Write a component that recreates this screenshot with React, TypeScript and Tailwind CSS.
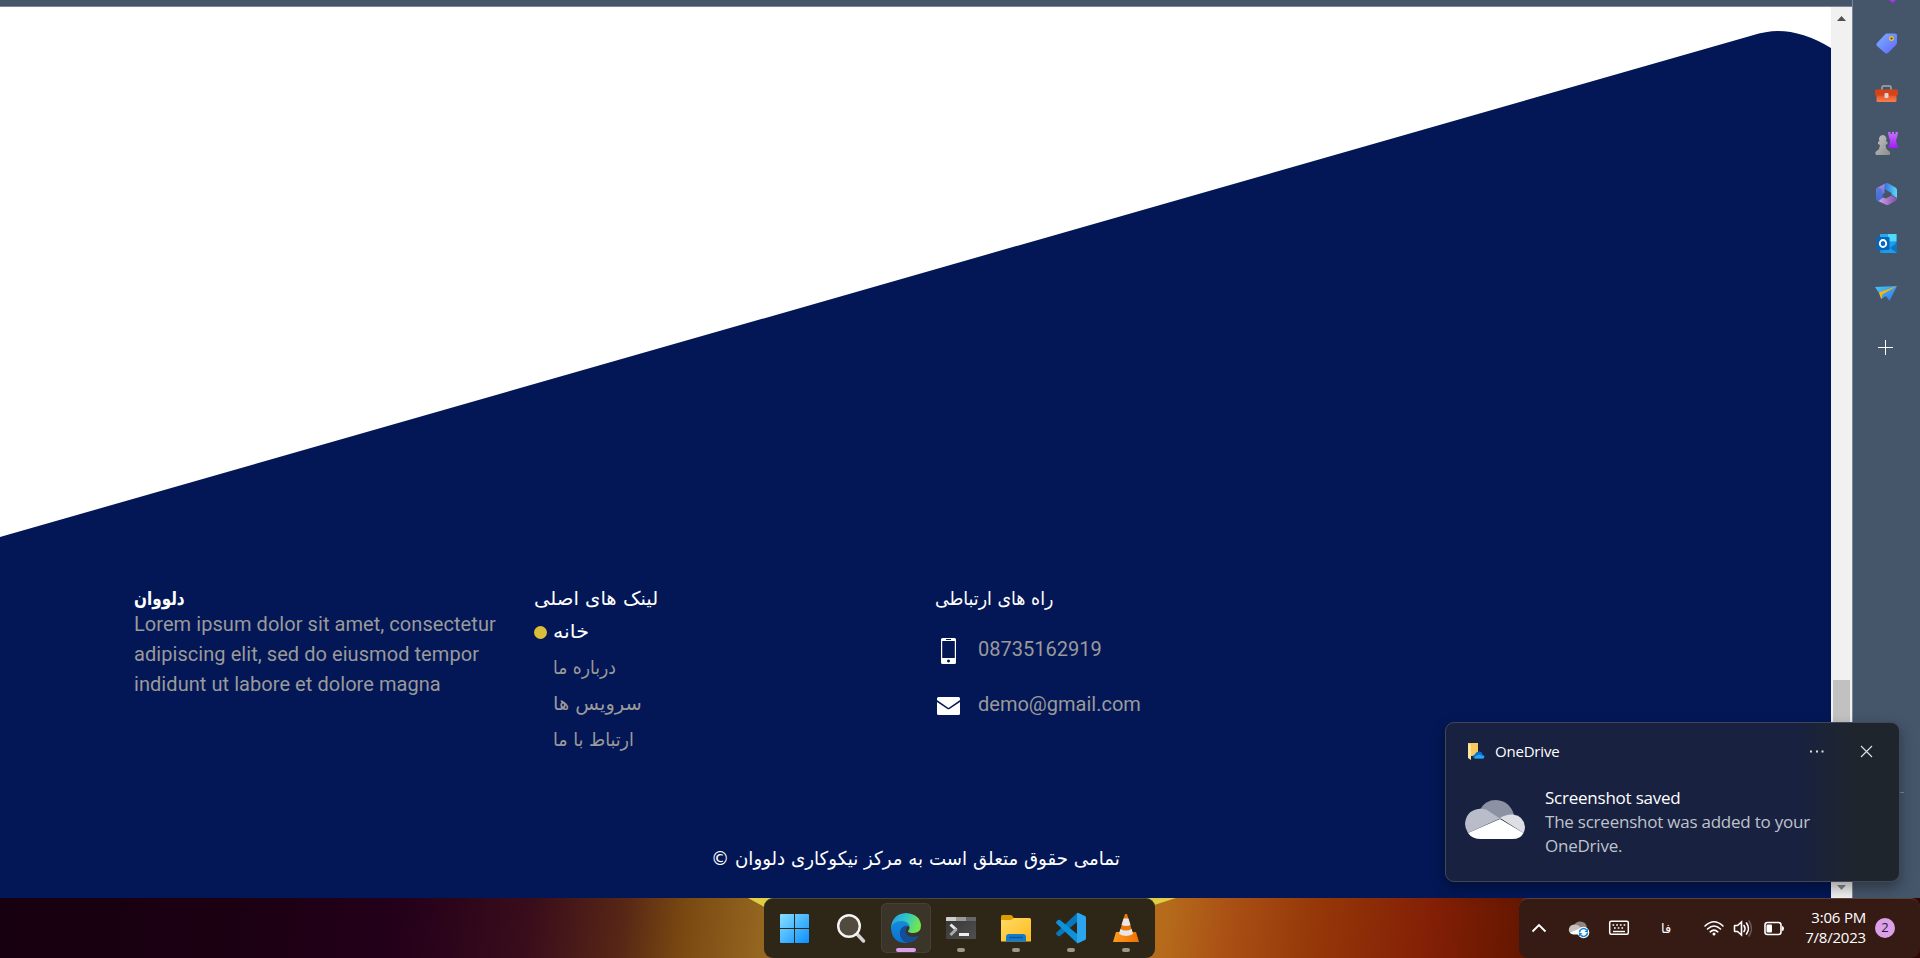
import type { ReactNode } from "react";

function Fa({ children, scale }: { children: ReactNode; scale: string }) {
  return <span dir="rtl" className={`relative top-px inline-block origin-left whitespace-nowrap ${scale}`}>{children}</span>;
}

function PageArea() {
  const links = [
    { label: "درباره ما", scale: "scale-x-[0.9]" },
    { label: "سرویس ها", scale: "scale-x-[1.02]" },
    { label: "ارتباط با ما", scale: "scale-x-[0.92]" },
  ];
  return (
    <main className="relative h-[891px] w-[1831px] overflow-hidden bg-white">
      <svg className="absolute inset-0" width="1831" height="891" viewBox="0 7 1831 891">
        <path d="M0 537 L1752 35.500 Q1766 31 1778 31 Q1803 31 1831 48 V898 H0 Z" fill="#031756" />
      </svg>
      <div className="relative flex h-full flex-col pt-[575px]">
        <div className="flex h-[250px] pl-[134px] text-xl">
          <section className="w-[400px]">
            <h3 className="h-[27px] font-['DejaVu_Sans'] text-[19px] leading-[30px] font-bold text-white">
              <Fa scale="scale-x-[0.8]">دلووان</Fa>
            </h3>
            <p className="font-['Roboto'] text-[20px] leading-[30px] tracking-[0.06px] whitespace-nowrap text-[#9a9a9a]">
              Lorem ipsum dolor sit amet, consectetur
              <br />
              adipiscing elit, sed do eiusmod tempor
              <br />
              indidunt ut labore et dolore magna
            </p>
          </section>
          <section className="w-[401px] font-['DejaVu_Sans'] text-[19px]">
            <h3 className="h-[30px] leading-[30px] text-white"><Fa scale="scale-x-[1.03]">لینک های اصلی</Fa></h3>
            <ul>
              <li className="flex h-9 items-center gap-[6px] text-white">
                <span className="mt-[4px] size-[13px] rounded-full bg-[#d9bf39]" />
                <span className="leading-9"><Fa scale="scale-x-[1.09]">خانه</Fa></span>
              </li>
              {links.map((l) => (
                <li key={l.label} className="h-9 pl-[19px] leading-9 text-[#9a9a9a]"><Fa scale={l.scale}>{l.label}</Fa></li>
              ))}
            </ul>
          </section>
          <section className="font-['Roboto'] text-[20px] text-[#9a9a9a]">
            <h3 className="h-[30px] font-['DejaVu_Sans'] text-[19px] leading-[30px] text-white"><Fa scale="scale-x-[0.915]">راه های ارتباطی</Fa></h3>
            <div className="mt-[18px] flex h-[55px] gap-[17px]">
              <svg width="26" height="42" viewBox="0 0 26 42">
                <path fill="#fff" fillRule="evenodd" d="M7.500 8h12q1.500 0 1.500 1.500v23q0 1.500-1.500 1.500h-12q-1.500 0-1.500-1.500v-23q0-1.500 1.500-1.500ZM7.200 11v17h12.600V11ZM11 9v1h5V9ZM13.500 29.500a1.500 1.500 0 1 0 .01 0Z" />
              </svg>
              <span className="leading-[38px]">08735162919</span>
            </div>
            <div className="flex h-[55px] gap-[17px]">
              <svg width="26" height="42" viewBox="0 -1 26 42">
                <path fill="#fff" d="M2 14v-1.500Q2 11 3.500 11h20Q25 11 25 12.500V14l-11.500 8ZM2 16l10.500 7q1 .6 2 0L25 16v11.500q0 1.500-1.500 1.500h-20Q2 29 2 27.500Z" />
              </svg>
              <span className="leading-[38px]">demo@gmail.com</span>
            </div>
          </section>
        </div>
        <p className="flex justify-center pt-[10px] font-['DejaVu_Sans'] text-[19px] leading-[30px] text-white">
          <span className="relative top-px inline-block scale-x-[0.958]">© تمامی حقوق متعلق است به مرکز نیکوکاری دلووان</span>
        </p>
      </div>
    </main>
  );
}

function ScrollBar() {
  return (
    <div className="flex h-[891px] w-[21px] flex-col items-center bg-[#f1f1f1]">
      <svg width="21" height="21" viewBox="0 0 21 21"><path d="M6 14l4.500-5 4.500 5Z" fill="#505050" /></svg>
      <div className="mt-[652px] h-[180px] w-[17px] bg-[#c1c1c1]" />
      <svg className="mt-auto" width="21" height="21" viewBox="0 0 21 21"><path d="M6 8l4.500 5 4.500-5Z" fill="#858585" /></svg>
    </div>
  );
}

function Sidebar() {
  return (
    <aside className="h-[898px] w-[68px] border-l border-[#7b8798] bg-[#45556a]">
      <svg width="67" height="898" viewBox="1853 0 67 898">
        <defs>
          <linearGradient id="tag" x1="0" y1="0" x2="1" y2="1"><stop stopColor="#7ab4ff" /><stop offset="1" stopColor="#6264ff" /></linearGradient>
          <linearGradient id="rook" x1="0" y1="0" x2="0" y2="1"><stop stopColor="#c873ff" /><stop offset="1" stopColor="#a01cf5" /></linearGradient>
          <linearGradient id="pawn" x1="0" y1="0" x2="1" y2="1"><stop stopColor="#c4c4c4" /><stop offset="1" stopColor="#8c8c8c" /></linearGradient>
          <linearGradient id="box" x1="0" y1="0" x2="0" y2="1"><stop stopColor="#dc4a17" /><stop offset="1" stopColor="#ff7c50" /></linearGradient>
          <linearGradient id="ma" x1="0" y1="0" x2="1" y2="0"><stop stopColor="#2f6ad8" /><stop offset="1" stopColor="#5ad8fa" /></linearGradient>
          <linearGradient id="mb" x1="0" y1="0" x2="0" y2="1"><stop stopColor="#b08be6" /><stop offset="1" stopColor="#3a66cf" /></linearGradient>
          <linearGradient id="mc" x1="0" y1="0" x2="1" y2="0"><stop stopColor="#d9a2ea" /><stop offset="1" stopColor="#7c4fa8" /></linearGradient>
          <linearGradient id="plane" x1="0" y1="0" x2="1" y2="1"><stop stopColor="#45c9f7" /><stop offset="1" stopColor="#3471ea" /></linearGradient>
        </defs>
        <path d="M1889 0h7l-3.500 3Z" fill="#a833ea" />
        <path d="M1887 33.500h8q2 0 2 2v7q0 1.500-1 2.500l-8 8q-1.500 1-3 0l-8-7q-1.500-1.500 0-3l8-8.500q1-1 2-1Z" fill="url(#tag)" />
        <circle cx="1891.500" cy="38.500" r="1.800" fill="#3b3f55" stroke="#f4c51e" strokeWidth="1.400" />
        <path d="M1882 90v-2.500q0-1.500 1.500-1.500h6q1.500 0 1.500 1.500V90" fill="none" stroke="#aaa" strokeWidth="1.500" />
        <rect x="1876.500" y="93" width="20" height="9" rx="1.500" fill="url(#box)" />
        <rect x="1875" y="89.500" width="23" height="6" rx="1.200" fill="#d54316" />
        <rect x="1884.500" y="93" width="4" height="5" rx="1" fill="#d8d8d8" />
        <path d="M1888 132h2.500v2h1.500v-2h2v2h1.500v-2h2.500l-1 6-1 2 1 5 1 1v2h-9.500v-2l1-1 .5-5-1-2Z" fill="url(#rook)" />
        <path d="M1882.500 135a4 4 0 0 1 3.500 6l1.500 1v2l-2 1 1 4 3.500 3v2q0 1-1 1h-12.500q-1 0-1-1v-2l3.500-3 1-4-2-1v-2l1.500-1a4 4 0 0 1 3-6Z" fill="url(#pawn)" />
        <path d="M1884 184.500l2-1.200q1-.5 2 0l7.500 4.200q1.500 1 1.500 2.500v8l-5.500-3.500v-1.500l-8-4.500Z" fill="url(#ma)" />
        <path d="M1886.500 183q-1.500.5-2 2v8l-2.500 2v4l-4 2.500q-2-1-2-3v-8.500q0-1.500 1.500-2.500Z" fill="url(#mb)" />
        <path d="M1878 201l5-3.500 3 1 5.500-3 5.500 2.500q.5 1.500-1.500 3l-6.500 3.500q-1.500 1-3 .3Z" fill="url(#mc)" />
        <path d="M1882 190l1 7-4 4q-2.500 0-2.500-3v-8.500q2-3 5.500.5Z" fill="#3d74d8" fillOpacity="0.7" />
        <rect x="1880" y="234" width="16.500" height="19" rx="1" fill="#1490df" />
        <path d="M1888 234h8.500v7.500H1888Z" fill="#50d9ff" />
        <path d="M1880 234h8v8h-8Z" fill="#28a8ea" />
        <path d="M1888 242h6l2.500 2v9H1880l8-5Z" fill="#1d9cea" />
        <path d="M1897 243v10l-7-5Z" fill="#0b75c4" />
        <rect x="1876.500" y="237" width="13" height="13" rx="1" fill="#0764bd" />
        <ellipse cx="1883" cy="243.500" rx="3.200" ry="3.500" fill="none" stroke="#fff" strokeWidth="1.900" />
        <path d="M1875 287l22-1-7.500 15-3.500-5-5 3-2-6Z" fill="url(#plane)" />
        <path d="M1897 286l-18 6.500 2.500 7 .8-5Z" fill="#ffb400" />
        <path d="M1878 347.500h15M1885.500 340v15" stroke="#fff" strokeWidth="1" />
        <path d="M1875 792.500h29" stroke="#7b8798" />
      </svg>
    </aside>
  );
}

function Toast() {
  return (
    <div className="absolute top-[722px] left-[1445px] h-[160px] w-[455px] rounded-[9px] border border-[#404858] bg-linear-to-r from-[#18213f] from-78% to-[#1f252d] to-90% font-['Open_Sans'] shadow-[0_6px_14px_rgba(0,0,0,0.35)]">
      <div className="flex h-[56px] items-center pl-[21px]">
        <svg width="18" height="18" viewBox="0 0 18 18">
          <path d="M1 1h10v13H1Z" fill="#f5ca60" />
          <path d="M1 1l3 2v15l-3-2Z" fill="#ffe49a" />
          <path d="M8 16.500q-2-.2-2-2t2-2q1-3 4-3t3.500 3q2 .3 2 2t-2 2Z" fill="#0a6fd0" />
          <path d="M8 16.500q-1-.2 0-2l4-2 5 2q.8 2-1.500 2Z" fill="#24a7ee" />
        </svg>
        <span className="ml-[10px] text-[15px] tracking-[-0.2px] text-white">OneDrive</span>
        <svg className="mr-[26px] ml-auto" width="64" height="16" viewBox="0 0 64 16">
          <path d="M1 8.500h2M7 8.500h2M12.500 8.500h2" stroke="#ddd" strokeWidth="1.800" />
          <path d="M52 3l11 11M63 3L52 14" stroke="#ddd" strokeWidth="1.200" />
        </svg>
      </div>
      <div className="flex pl-[19px]">
        <svg className="mt-[21px]" width="60" height="40" viewBox="0 0 60 40">
          <path d="M15 9.500Q20 0 31 0q14 1 18 15L35 19Z" fill="#8c92a4" />
          <path d="M3 33q-3-5-3-9Q1 11 13 9q7-1 12 3l10 6.500Z" fill="#b9bdc9" />
          <path d="M35 18q6-4 13-3.500Q59 16 60 27q0 3-1.500 6Z" fill="#dddfe5" />
          <path d="M3 33l32-14 23.500 14q-3 6-11 6H16Q7 39 3 33Z" fill="#fff" />
        </svg>
        <div className="ml-5 pt-[7px] text-[17px] leading-6 tracking-[-0.23px] whitespace-nowrap text-[#bfc3cd]">
          <p className="text-white">Screenshot saved</p>
          <p>The screenshot was added to your</p>
          <p>OneDrive.</p>
        </div>
      </div>
    </div>
  );
}

function TaskIcon({ children, active, running }: { children: ReactNode; active?: boolean; running?: boolean }) {
  return (
    <div className={`flex h-[50px] w-[50px] flex-col items-center rounded-md pt-[9px] ${active ? "bg-[#3b3529] ring-1 ring-inset ring-[#464034]" : ""}`}>
      <svg width="32" height="32" viewBox="0 0 32 32">{children}</svg>
      {active && <span className="mt-1 h-1 w-5 rounded-full bg-[#dd9fe8]" />}
      {running && <span className="mt-1 h-1 w-2 rounded-full bg-[#9b958c]" />}
    </div>
  );
}

function AppTray() {
  return (
    <div className="flex h-[60px] w-[391px] gap-[5px] rounded-[9px] border-t border-[#4d473a] bg-[#2e2617] pt-1 pl-[7px]">
      <TaskIcon>
        <defs><linearGradient id="win" gradientUnits="userSpaceOnUse" x1="0" y1="1" x2="29" y2="30"><stop stopColor="#8be1ff" /><stop offset="1" stopColor="#0b91ff" /></linearGradient></defs>
        <path d="M0 3q0-1 1-1h13v14H0ZM15 2h13q1 0 1 1v13H15ZM0 17h14v14H1q-1 0-1-1ZM15 17h14v13q0 1-1 1H15Z" fill="url(#win)" />
      </TaskIcon>
      <TaskIcon>
        <path d="M22 22l6.500 7" stroke="#d4d4d4" strokeWidth="3.500" strokeLinecap="round" />
        <circle cx="14" cy="14" r="10.800" fill="#514b3f" stroke="#f4f4f4" strokeWidth="2.400" />
      </TaskIcon>
      <TaskIcon active>
        <defs>
          <linearGradient id="e1" x1="0" y1="0" x2="1" y2=".3"><stop stopColor="#2999df" /><stop offset=".5" stopColor="#2fc2cf" /><stop offset="1" stopColor="#6fe650" /></linearGradient>
          <linearGradient id="e2" x1="0" y1="0" x2="0" y2="1"><stop stopColor="#138cdd" /><stop offset="1" stopColor="#0d70d0" /></linearGradient>
        </defs>
        <path d="M1 16Q2 2 16 1q14 1 15 12.500 0 7-7 7.500-6 0-6-2 2-2 1.500-4Q18 11 13 10 5 10 1 16Z" fill="url(#e1)" />
        <path d="M1 16Q3 9 11 9q7 0 8.500 5-9 0-9.500 8 1 7 8 9Q2 32 1 16Z" fill="url(#e2)" />
        <path d="M15 13.500q-6 3-5 9 2 8 9 8.200 6-.7 9.500-6.200.2-1-1-.5-6 2.500-10-1-3.500-3.500-.5-7Z" fill="#124e99" />
      </TaskIcon>
      <TaskIcon running>
        <defs><linearGradient id="term" x1="0" y1="0" x2="1" y2="1"><stop stopColor="#363636" /><stop offset="1" stopColor="#505050" /></linearGradient></defs>
        <rect x="1" y="5" width="30" height="22" rx="1" fill="url(#term)" />
        <path d="M2 5h9v4H1V6q0-1 1-1Z" fill="#cfcfcf" /><path d="M11 5h10v4H11Z" fill="#999" /><path d="M21 5h9q1 0 1 1v3H21Z" fill="#666" />
        <path d="M5.500 12.500L11.500 18" stroke="#e8e8e8" strokeWidth="3" /><path d="M11.500 17L5.500 23" stroke="#aaa" strokeWidth="3" />
        <path d="M14 21h10v3H14Z" fill="#eee" />
      </TaskIcon>
      <TaskIcon running>
        <defs><linearGradient id="fold" x1="0" y1="0" x2="1" y2="1"><stop stopColor="#ffdc62" /><stop offset="1" stopColor="#ffb91f" /></linearGradient></defs>
        <path d="M1 9V4.500Q1 3 2.500 3h8q1 0 2 1L14 6.500V9Z" fill="#dd9c00" />
        <path d="M1 8h10l3-2h15.500Q31 6 31 7.500v22H1Z" fill="url(#fold)" />
        <path d="M6 29.500v-4.500q0-3 3-3h14q3 0 3 3v4.500Z" fill="#1279cc" /><path d="M9 25.500h14" stroke="#07549b" strokeWidth="1.300" />
      </TaskIcon>
      <TaskIcon running>
        <path d="M22 1v9L5 24q-1 .7-2 0l-1.500-1.500q-1-1 0-2Z" fill="#0878bd" />
        <path d="M22 31v-9L5 8q-1-.7-2 0L1.500 9.500q-1 1 0 2Z" fill="#0b92db" />
        <path d="M22 1q.7-.5 1.500 0L30 4q1 .6 1 2v20q0 1.400-1 2l-6.500 3q-.8.500-1.500 0Z" fill="#2ba6ee" />
      </TaskIcon>
      <TaskIcon running>
        <defs><linearGradient id="vlc" x1="0" y1="0" x2="1" y2="0"><stop stopColor="#ff9b1f" /><stop offset="1" stopColor="#ef7100" /></linearGradient></defs>
        <path d="M6 20h20l3 10H3Z" fill="url(#vlc)" />
        <path d="M15 2h2l6 20q-7 4-14 0Z" fill="#ee7609" />
        <path d="M13.500 6.500h5L20.500 13q-4.500 2-9 0ZM10.300 17q5.500 3 11.400 0l1.300 5q-7 4-14 0Z" fill="#e7e7e7" />
      </TaskIcon>
    </div>
  );
}

function SystemTray() {
  return (
    <div className="flex h-[60px] w-[401px] items-center rounded-[9px] border-t border-[#5a4340] bg-[#361b14] font-['Open_Sans'] text-white">
      <svg className="shrink-0" width="122" height="60" viewBox="1519 898.500 122 60">
        <path d="M1532.500 931l6.500-6.500 6.500 6.500" fill="none" stroke="#fff" strokeWidth="1.900" />
        <path d="M1574 925q2-4 6-4 6 0 7 6l-6 3Z" fill="#8f8583" />
        <path d="M1571 933q-3-2-2-5 1-4 6-4 3 0 7 4Z" fill="#c8c1bf" />
        <path d="M1570 932l10-4 4 3v3h-9q-4 0-5-2Z" fill="#fff" />
        <circle cx="1583.500" cy="932" r="5.800" fill="#fff" />
        <path d="M1579.500 932a4 4 0 0 1 7-2.500m1 2.500a4 4 0 0 1-7 2.500" fill="none" stroke="#1683d8" strokeWidth="1.500" />
        <path d="M1588 928v3.500h-3.500ZM1579 936v-3.500h3.500Z" fill="#1683d8" />
        <rect x="1609.700" y="920.700" width="18.600" height="13" rx="1.500" fill="none" stroke="#fff" strokeWidth="1.500" />
        <path d="M1612.500 924.500h13M1614 927.500h11" stroke="#fff" strokeWidth="1.700" strokeDasharray="1.700 2" /><path d="M1613 931h12" stroke="#fff" strokeWidth="1.400" />
      </svg>
      <span className="ml-[20px] w-[14px] font-['DejaVu_Sans'] text-[13px]">فا</span>
      <svg className="ml-[23px] shrink-0" width="92" height="60" viewBox="1698 898.500 92 60">
        <g fill="none" stroke="#fff" strokeWidth="1.600" strokeLinecap="round">
          <path d="M1705 925.500q9-8.500 18 0M1707.500 928.500q6.500-6 13 0M1710.200 931.300q3.800-3.500 7.600 0" />
          <path d="M1734.500 925.500v5q0 .5.500.5h2.500l4 3.500v-13l-4 3.500h-2.500q-.5 0-.5.500ZM1744 925q2 3 0 6M1746.500 922.500q4 5.500 0 11" />
          <path d="M1749 920.500q5 7.500 0 15" stroke="#725752" />
          <rect x="1765" y="922" width="16" height="12" rx="2.500" />
        </g>
        <circle cx="1714" cy="933.500" r="1.500" fill="#fff" />
        <rect x="1766.500" y="924" width="5.500" height="8" rx="1" fill="#fff" />
        <path d="M1782 925.500q2 0 2 2.500t-2 2.500Z" fill="#fff" />
      </svg>
      <div className="mb-[4px] ml-auto text-right text-[15px] leading-5 tracking-[-0.2px] whitespace-nowrap">
        <p>3:06 PM</p>
        <p>7/8/2023</p>
      </div>
      <span className="mr-[25px] mb-px ml-[9px] flex size-5 shrink-0 items-center justify-center rounded-full bg-[#dca0e8] text-[13px] text-[#2b1830]">2</span>
    </div>
  );
}

export default function App() {
  return (
    <div className="relative h-[958px] w-[1920px] overflow-hidden bg-[#45556a]">
      <div className="flex h-[898px]">
        <div className="w-[1852px]">
          <div className="h-[7px] border-b border-[#7b8798] bg-[#45556a]" />
          <div className="flex">
            <PageArea />
            <ScrollBar />
          </div>
        </div>
        <Sidebar />
      </div>
      <footer className="relative flex h-[60px] justify-between bg-[linear-gradient(97deg,#170010_0px,#1b0012_230px,#24001a_400px,#3a0d1b_530px,#572616_620px,#784811_680px,#956620_760px,#b56b1b_1160px,#aa5115_1220px,#953708_1310px,#832006_1420px,#671700_1510px,#330606_1900px)] pl-[764px]">
        <svg className="absolute inset-0" width="1920" height="60" viewBox="0 0 1920 60"><path d="M748 0h40v22ZM1145 0h31l-31 10Z" fill="#decd45" /></svg>
        <div className="relative"><AppTray /></div>
        <div className="relative"><SystemTray /></div>
      </footer>
      <Toast />
    </div>
  );
}
